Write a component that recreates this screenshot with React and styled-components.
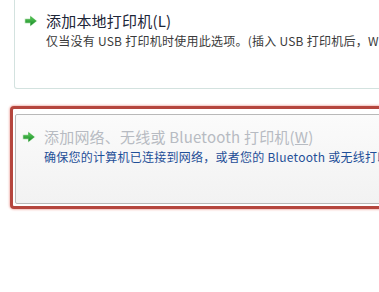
import React from 'react';
import styled, { createGlobalStyle } from 'styled-components';

const GlobalStyle = createGlobalStyle`
    html, body {
        margin: 0;
        padding: 0;
        background: #fff;
    }
    body {
        font-family: "Noto Sans CJK SC", "Noto Sans", sans-serif;
    }
`;

const Page = styled.div`
    width: 379px;
    height: 292px;
    overflow: hidden;
    background: #fff;
    padding-left: 10px;
    box-sizing: border-box;
`;

const PlainCard = styled.div`
    width: 420px;
    height: 89px;
    margin-left: 4px;
    box-sizing: border-box;
    border: 1px solid #d3e2df;
    border-top: none;
    border-radius: 0 0 3px 3px;
    background: #fff;
    padding-top: 11px;
`;

const Highlight = styled.div`
    width: 420px;
    margin-top: 17px;
    box-sizing: border-box;
    border: 3px solid #b5463e;
    border-radius: 4px;
    box-shadow: 0 0 2px 1px #f3c0bc;
    padding: 5px 0 2px 2px;
    background: #fff;
`;

const GreyCard = styled.div`
    height: 90px;
    box-sizing: border-box;
    border: 1px solid #b9b9b9;
    border-radius: 2px;
    background: linear-gradient(#fbfbfb, #f2f2f2);
    padding-top: 12px;
`;

const Row = styled.div`
    display: flex;
    align-items: flex-start;
    gap: 8px;
    padding-left: ${p => p.$indent}px;
`;

const Arrow = styled.svg`
    flex: none;
    width: 14px;
    height: 12px;
    margin-top: 4px;
`;

const Texts = styled.div`
    display: flex;
    flex-direction: column;
    white-space: nowrap;
`;

const Title = styled.div`
    font-size: 15px;
    line-height: 20px;
    letter-spacing: 0.2px;
    color: ${p => (p.$disabled ? '#b7bbc2' : '#1c2638')};
`;

const Key = styled.span`
    text-decoration: ${p => (p.$underline ? 'underline' : 'none')};
`;

const Note = styled.div`
    font-size: 12px;
    line-height: 16px;
    margin-top: 2px;
    letter-spacing: 0.25px;
    color: ${p => (p.$blue ? '#1f4f98' : '#3a3a3a')};
`;

const GreenArrow = () => (
    <Arrow viewBox="0 0 14 12">
        <defs>
            <linearGradient id="ga" x1="0" y1="0" x2="0" y2="1">
                <stop offset="0" stopColor="#5cd058" />
                <stop offset="1" stopColor="#17862a" />
            </linearGradient>
        </defs>
        <path d="M0.5 3.6 H6 V0.3 L13.5 6 L6 11.7 V8.4 H0.5 Z" fill="#c6ecc4" opacity="0.7" />
        <path d="M1.6 4.4 H6.6 V1.6 L12.2 6 L6.6 10.4 V7.6 H1.6 Z" fill="url(#ga)" stroke="#259a2a" strokeWidth="0.5" />
    </Arrow>
);

const App = () => {
    return (
        <Page>
            <GlobalStyle />
            <PlainCard>
                <Row $indent={9}>
                    <GreenArrow />
                    <Texts>
                        <Title>添加本地打印机(<Key>L</Key>)</Title>
                        <Note>仅当没有 USB 打印机时使用此选项。(插入 USB 打印机后，Windows 会自动安装)</Note>
                    </Texts>
                </Row>
            </PlainCard>
            <Highlight>
                <GreyCard>
                    <Row $indent={6}>
                        <GreenArrow />
                        <Texts>
                            <Title $disabled>添加网络、无线或 Bluetooth 打印机(<Key $underline>W</Key>)</Title>
                            <Note $blue>确保您的计算机已连接到网络，或者您的 Bluetooth 或无线打印机已启用。</Note>
                        </Texts>
                    </Row>
                </GreyCard>
            </Highlight>
        </Page>
    );
};

export default App;
